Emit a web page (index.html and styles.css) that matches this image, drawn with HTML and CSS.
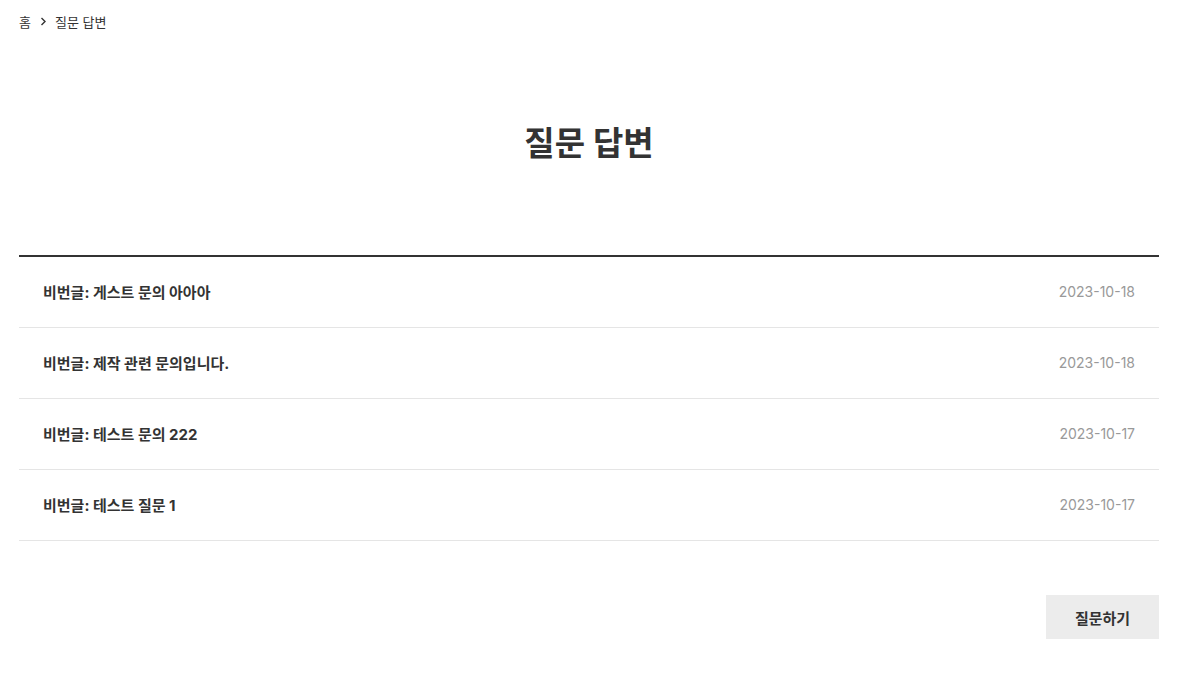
FILE: index.html
```html
<!DOCTYPE html>
<html lang="ko">
<head>
<meta charset="utf-8">
<title>질문 답변</title>
<link rel="stylesheet" href="styles.css">
</head>
<body>
<div class="page">
  <nav class="breadcrumb">
    <span>홈</span>
    <svg class="chev" width="8" height="9" viewBox="0 0 8 9"><path d="M2.5 1 L6 4.5 L2.5 8" fill="none" stroke="#333" stroke-width="1.4"/></svg>
    <span>질문 답변</span>
  </nav>
  <h1 class="title">질문 답변</h1>
  <ul class="board">
    <li class="row"><span class="subject">비번글: 게스트 문의 아아아</span><span class="date">2023-10-18</span></li>
    <li class="row"><span class="subject">비번글: 제작 관련 문의입니다.</span><span class="date">2023-10-18</span></li>
    <li class="row"><span class="subject">비번글: 테스트 문의 222</span><span class="date">2023-10-17</span></li>
    <li class="row"><span class="subject">비번글: 테스트 질문 1</span><span class="date">2023-10-17</span></li>
  </ul>
  <div class="actions">
    <button class="btn">질문하기</button>
  </div>
</div>
</body>
</html>
```
FILE: styles.css
```css
* { box-sizing: border-box; }
html, body { margin: 0; padding: 0; background: #fff; }
body {
  font-family: Inter, "Noto Sans CJK KR", sans-serif;
  color: #333;
}
.page {
  width: 1140px;
  margin-left: 19px;
}
.breadcrumb {
  display: flex;
  align-items: center;
  gap: 8px;
  height: 42px;
  font-size: 13px;
  color: #333;
}
.chev { display: block; }
.title {
  margin: 0;
  padding-top: 77px;
  height: 213px;
  text-align: center;
  font-size: 33px;
  font-weight: 700;
  line-height: 48px;
  color: #333;
}
.board {
  list-style: none;
  margin: 0;
  padding: 0;
  border-top: 2px solid #333;
}
.row {
  display: flex;
  justify-content: space-between;
  align-items: center;
  height: 71px;
  padding: 0 24px 2px;
  border-bottom: 1px solid #e5e5e5;
}
.subject {
  font-size: 15px;
  font-weight: 700;
  color: #333;
}
.date {
  font-size: 14px;
  color: #999;
}
.actions {
  display: flex;
  justify-content: flex-end;
  padding-top: 54px;
}
.btn {
  width: 113px;
  height: 44px;
  border: 0;
  background: #ececec;
  font-family: inherit;
  font-size: 15px;
  font-weight: 700;
  color: #333;
}
```
